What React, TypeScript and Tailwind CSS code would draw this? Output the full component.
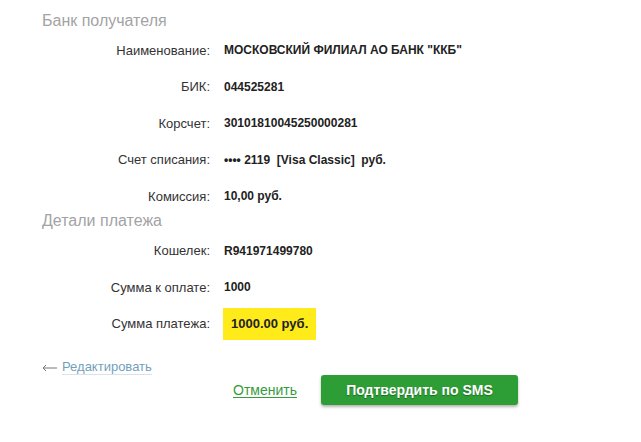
export default function App() {
  const bank = [
    { label: "Наименование:", value: 'МОСКОВСКИЙ ФИЛИАЛ АО БАНК "ККБ"' },
    { label: "БИК:", value: "044525281" },
    { label: "Корсчет:", value: "30101810045250000281" },
    { label: "Счет списания:", value: "•••• 2119  [Visa Classic]  руб." },
    { label: "Комиссия:", value: "10,00 руб." },
  ];
  const payment = [
    { label: "Кошелек:", value: "R941971499780" },
    { label: "Сумма к оплате:", value: "1000" },
  ];

  const Row = ({ label, value }: { label: string; value: string }) => (
    <div className="flex h-[36.5px] items-center">
      <div className="w-[168px] text-right text-[13px] text-[#333]">{label}</div>
      <div className="ml-[14px] whitespace-pre text-[12px] font-bold text-[#222]">{value}</div>
    </div>
  );

  return (
    <div
      className="h-[442px] w-[641px] bg-white"
      style={{ fontFamily: '"Liberation Sans", Arial, sans-serif' }}
    >
      <div className="pl-[42px] pt-[11px]">
        <h2 className="h-[20px] text-[16px] leading-[20px] text-[#a3a3a3]">Банк получателя</h2>
        <div className="mt-[1px]">
          {bank.map((r) => (
            <Row key={r.label} {...r} />
          ))}
        </div>
        <h2 className="mt-[-4px] h-[20px] text-[16px] leading-[20px] text-[#a3a3a3]">Детали платежа</h2>
        <div className="mt-[2px]">
          {payment.map((r) => (
            <Row key={r.label} {...r} />
          ))}
          <div className="flex h-[36.5px] items-center">
            <div className="w-[168px] text-right text-[13px] text-[#333]">Сумма платежа:</div>
            <div className="ml-[13px] bg-[#ffeb1a] px-[8px] py-[6px] text-[13px] font-bold text-[#222]">
              1000.00 руб.
            </div>
          </div>
        </div>
        <div className="mt-[17px] flex items-center text-[13px]">
          <svg width="15" height="8" viewBox="0 0 15 8" className="mt-[2px] text-[#777]">
            <path d="M15 4H1M4 1L1 4l3 3" fill="none" stroke="currentColor" strokeWidth="1" />
          </svg>
          <a className="ml-[5px] border-b border-[#d8e2e8] leading-[15px] text-[#739fbd]">Редактировать</a>
        </div>
      </div>
      <div className="mt-[0px] flex items-center pl-[233px]">
        <a className="text-[14px] text-[#369b3c] underline underline-offset-2">Отменить</a>
        <button className="ml-[24px] h-[30px] w-[197px] rounded-[3px] bg-[#2d9e36] text-[14px] font-bold text-white shadow-[0_2px_3px_rgba(0,0,0,0.3)] [text-shadow:0_1px_1px_rgba(0,0,0,0.35)]">
          Подтвердить по SMS
        </button>
      </div>
    </div>
  );
}
